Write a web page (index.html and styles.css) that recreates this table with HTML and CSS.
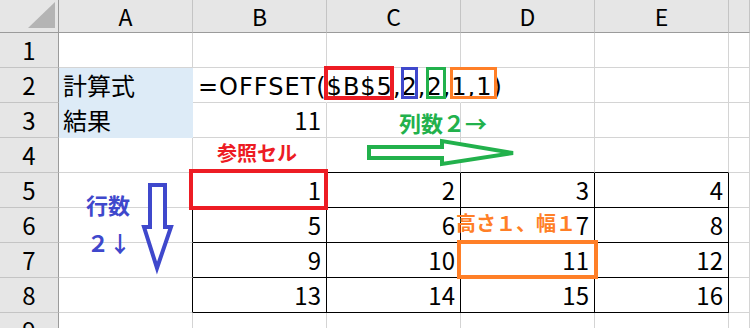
FILE: index.html
```html
<!DOCTYPE html>
<html lang="ja">
<head>
<meta charset="utf-8">
<title>OFFSET</title>
<link rel="stylesheet" href="styles.css">
</head>
<body>
<div class="sheet">
  <div class="grid">
    <div class="corner"><svg class="tri" width="58" height="32" viewBox="0 0 58 32"><polygon points="28,28 55,28 55,2" fill="#b4b4b4"/></svg></div>
    <div class="ch">A</div><div class="ch">B</div><div class="ch">C</div><div class="ch">D</div><div class="ch">E</div><div class="ch"></div>

    <div class="rh">1</div><div class="c"></div><div class="c"></div><div class="c"></div><div class="c"></div><div class="c"></div><div class="c"></div>

    <div class="rh">2</div><div class="c fill txt">計算式</div><div class="c txt formula open"><span class="ftext">=OFFSET($B$5,2,2,1,1)</span></div><div class="c open"></div><div class="c"></div><div class="c"></div><div class="c"></div>

    <div class="rh">3</div><div class="c fill txt">結果</div><div class="c num">11</div><div class="c"></div><div class="c"></div><div class="c"></div><div class="c"></div>

    <div class="rh">4</div><div class="c"></div><div class="c top"></div><div class="c top"></div><div class="c top"></div><div class="c top"></div><div class="c"></div>

    <div class="rh">5</div><div class="c lft"></div><div class="c num tb">1</div><div class="c num tb">2</div><div class="c num tb">3</div><div class="c num tb">4</div><div class="c"></div>

    <div class="rh">6</div><div class="c lft"></div><div class="c num tb">5</div><div class="c num tb">6</div><div class="c num tb">7</div><div class="c num tb">8</div><div class="c"></div>

    <div class="rh">7</div><div class="c lft"></div><div class="c num tb">9</div><div class="c num tb">10</div><div class="c num tb">11</div><div class="c num tb">12</div><div class="c"></div>

    <div class="rh">8</div><div class="c lft"></div><div class="c num tb">13</div><div class="c num tb">14</div><div class="c num tb">15</div><div class="c num tb">16</div><div class="c"></div>

    <div class="rh">9</div><div class="c"></div><div class="c"></div><div class="c"></div><div class="c"></div><div class="c"></div><div class="c"></div>
  </div>

  <svg class="shapes" width="750" height="328" viewBox="0 0 750 328">
    <rect x="326" y="68" width="66" height="30" fill="none" stroke="#ed1c24" stroke-width="4"/>
    <rect x="402.5" y="68.5" width="14" height="29" fill="none" stroke="#3f48cc" stroke-width="3"/>
    <rect x="427.5" y="68.5" width="17" height="29" fill="none" stroke="#22b14c" stroke-width="3"/>
    <rect x="451.5" y="68.5" width="44" height="29" fill="none" stroke="#ff7f27" stroke-width="3"/>
    <rect x="191" y="171" width="135" height="37" fill="none" stroke="#ed1c24" stroke-width="4"/>
    <rect x="459" y="242" width="137" height="35" fill="none" stroke="#ff7f27" stroke-width="4"/>
    <polygon points="369,147 442,147 442,141 513,153 442,164 442,158 369,158" fill="#fff" stroke="#22b14c" stroke-width="4" stroke-linejoin="miter"/>
    <polygon points="150,185 165,185 165,227 171,227 157,268 144,227 150,227" fill="#fff" stroke="#3f48cc" stroke-width="4" stroke-linejoin="miter"/>
  </svg>

  <div class="label lbl-ref">参照セル</div>
  <div class="label lbl-col">列数２→</div>
  <div class="label lbl-row">行数</div>
  <div class="label lbl-row2">２↓</div>
  <div class="label lbl-size">高さ１、幅１</div>
</div>
</body>
</html>
```

FILE: styles.css
```css
html, body {
  margin: 0;
  padding: 0;
  background: #fff;
}
body {
  width: 750px;
  height: 328px;
  overflow: hidden;
  font-family: "Noto Sans CJK JP", "Noto Sans", sans-serif;
  color: #000;
}
.sheet {
  position: relative;
  width: 750px;
  height: 328px;
  overflow: hidden;
}
.grid {
  display: grid;
  grid-template-columns: 59px repeat(5, 134px) 1fr;
  grid-template-rows: 33px repeat(9, 35px);
}
.grid > div {
  box-sizing: border-box;
  border-right: 1px solid #d4d4d4;
  border-bottom: 1px solid #d4d4d4;
  font-size: 24px;
  line-height: 34px;
  white-space: nowrap;
  min-width: 0;
}
.corner {
  background: #e6e6e6;
  border-right-color: #9b9b9b !important;
  border-bottom-color: #9b9b9b !important;
}
.tri {
  display: block;
}
.grid > .ch {
  background: #e6e6e6;
  text-align: center;
  font-size: 23px;
  line-height: 32px;
  border-right-color: #c4c4c4;
  border-bottom-color: #9b9b9b;
}
.rh {
  background: #e6e6e6;
  text-align: center;
  border-right-color: #9b9b9b !important;
  border-bottom-color: #c4c4c4 !important;
}
.txt {
  padding-left: 4px;
}
.num {
  text-align: right;
  padding-right: 5px;
}
.fill {
  background: #ddebf7;
  border-right-color: #ddebf7 !important;
  border-bottom-color: #ddebf7 !important;
}
.formula {
  overflow: visible;
  position: relative;
  z-index: 1;
  padding-left: 5px;
}
.ftext {
  font-family: "DejaVu Sans", "Noto Sans CJK JP", sans-serif;
  letter-spacing: 1px;
}
.open {
  border-right-color: transparent !important;
}
.top {
  border-bottom-color: #000 !important;
}
.lft {
  border-right-color: #000 !important;
}
.tb {
  border-right-color: #000 !important;
  border-bottom-color: #000 !important;
}
.shapes {
  position: absolute;
  left: 0;
  top: 0;
  z-index: 2;
}
.label {
  position: absolute;
  z-index: 3;
  font-weight: 700;
  line-height: 1;
  white-space: nowrap;
}
.lbl-ref {
  left: 217px;
  top: 143px;
  font-size: 20px;
  color: #ed1c24;
}
.lbl-col {
  left: 399px;
  top: 111px;
  font-size: 22px;
  color: #22b14c;
}
.lbl-row {
  left: 86px;
  top: 193px;
  font-size: 22px;
  color: #3f48cc;
}
.lbl-row2 {
  left: 87px;
  top: 231px;
  font-size: 22px;
  color: #3f48cc;
}
.lbl-size {
  left: 456px;
  top: 213px;
  font-size: 20px;
  color: #ff7f27;
}
```
